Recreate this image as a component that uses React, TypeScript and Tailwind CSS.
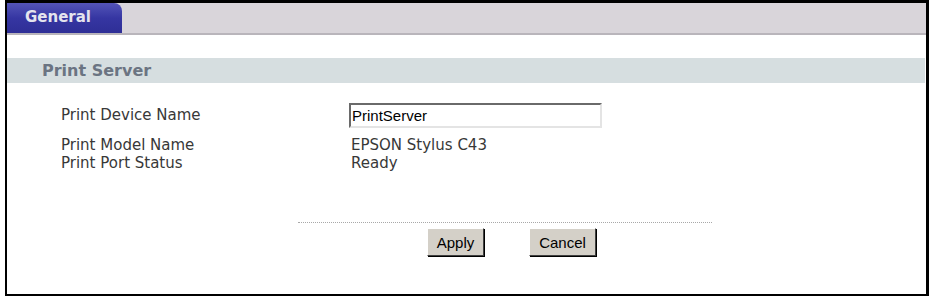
import React from "react";

const rows = [
  { label: "Print Model Name", value: "EPSON Stylus C43" },
  { label: "Print Port Status", value: "Ready" },
];

const bevel =
  "border border-t-white border-l-white border-r-[#404040] border-b-[#404040] bg-[#d4d0c8] shadow-[1px_1px_0_#000] font-['Liberation_Sans',Arial,sans-serif] text-[15px] text-black leading-none";

export default function App() {
  return (
    <div className="h-[298px] w-[929px] bg-white pl-[5px]">
      <div className="flex h-[296px] w-[924px] flex-col border-2 border-t-[3px] border-r-[3px] border-black bg-white font-['DejaVu_Sans',Verdana,sans-serif]">
        {/* tab strip */}
        <div className="flex h-[32px] border-b-2 border-[#b9b5bb] bg-[#d9d5da]">
          <div className="flex w-[115px] items-center rounded-tr-[8px] bg-gradient-to-b from-[#5454b8] via-[#3636a2] to-[#2e2e96] pl-[18px] pb-[2px] text-[15px] font-bold text-[#e4e4ee]">
            General
          </div>
        </div>

        {/* section header */}
        <div className="mt-[23px] mr-[1px] flex h-[25px] items-center bg-[#d6dee0] pl-[35px] text-[16px] font-bold text-[#6b7482]">
          Print Server
        </div>

        {/* fields */}
        <div className="mt-[20px] flex flex-col pl-[54px] text-[15px] text-[#383838]">
          <div className="flex h-[25px] items-center">
            <span className="w-[288px]">Print Device Name</span>
            <input
              defaultValue="PrintServer"
              className="h-[25px] w-[253px] border-2 border-t-[#6a6a6a] border-l-[#6a6a6a] border-r-[#e4e4e4] border-b-[#e4e4e4] px-[1px] font-['Liberation_Sans',Arial,sans-serif] text-[15px] text-black outline-none"
            />
          </div>
          <div className="mt-[8px] flex flex-col">
            {rows.map((r) => (
              <div key={r.label} className="flex h-[18px] items-center">
                <span className="w-[290px]">{r.label}</span>
                <span>{r.value}</span>
              </div>
            ))}
          </div>
        </div>

        {/* footer */}
        <div className="mt-[50px] ml-[291px] w-[414px] border-t border-dotted border-[#a8a8a8]" />
        <div className="mt-[5px] flex gap-[45px] pl-[420px]">
          <button className={`${bevel} h-[28px] w-[57px]`}>Apply</button>
          <button className={`${bevel} h-[28px] w-[67px]`}>Cancel</button>
        </div>
      </div>
    </div>
  );
}
